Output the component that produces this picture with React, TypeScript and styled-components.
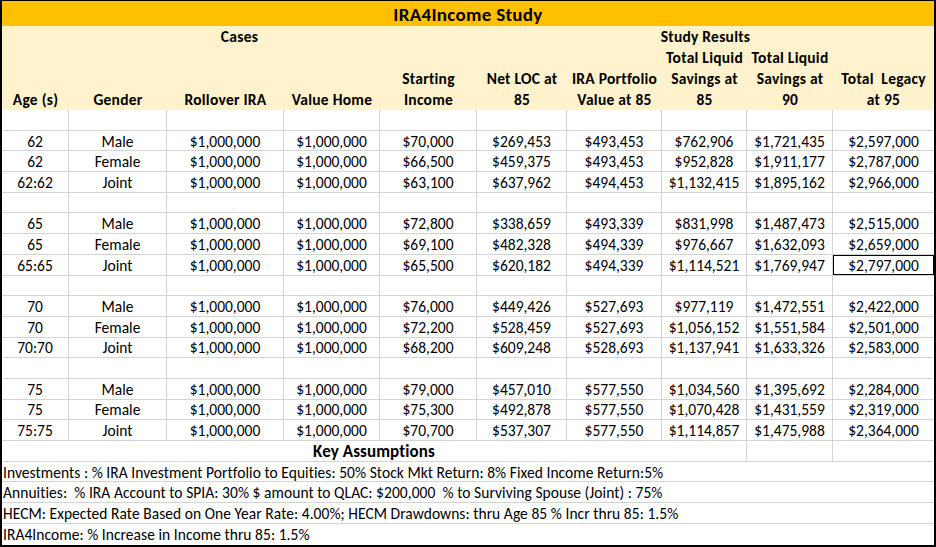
import React from "react";
import styled, { createGlobalStyle } from "styled-components";

const GlobalStyle = createGlobalStyle`
  html, body { margin: 0; padding: 0; background: #ffffff; }
  body { font-family: Carlito, Lato, "Liberation Sans", sans-serif; color: #000; }
`;

const GRID = "#d4d4d4";

const Sheet = styled.div`
  width: 936px;
  height: 547px;
  box-sizing: border-box;
  border-style: solid;
  border-color: #000;
  border-width: 1px 2px 2px 2px;
  display: grid;
  grid-template-columns: 67px 98px 117px 96px 97px 90px 95px 85px 86px 101px;
  grid-template-rows: 25px 21px 63px repeat(21, 20.7px);
  font-size: 15.5px;
  overflow: hidden;
`;

const TitleCell = styled.div`
  grid-column: 1 / -1;
  background: #ffc000;
  font-weight: 700;
  font-size: 19px;
  letter-spacing: 0.3px;
  display: flex;
  align-items: center;
  justify-content: center;
  padding-top: 1px;
`;

const GroupHeader = styled.div<{ $span: number }>`
  grid-column: span ${(p) => p.$span};
  background: #fff2cc;
  font-weight: 700;
  letter-spacing: 0.25px;
  display: flex;
  align-items: center;
  justify-content: center;
`;

const ColumnHeader = styled.div`
  background: #fff2cc;
  font-weight: 700;
  letter-spacing: 0.25px;
  display: flex;
  align-items: flex-end;
  justify-content: center;
  text-align: center;
  line-height: 21px;
  white-space: pre;
`;

const DataCell = styled.div<{ $last?: boolean; $boxed?: boolean }>`
  box-sizing: border-box;
  border-right: ${(p) => (p.$last ? "none" : `1px solid ${GRID}`)};
  border-bottom: 1px solid ${GRID};
  display: flex;
  align-items: center;
  justify-content: center;
  padding-top: 1px;
  white-space: nowrap;
  ${(p) => (p.$boxed ? "box-shadow: inset 0 0 0 1px #000;" : "")}
`;

const KeyTitle = styled.div`
  grid-column: 1 / span 8;
  box-sizing: border-box;
  border-right: 1px solid ${GRID};
  border-bottom: 1px solid ${GRID};
  font-weight: 700;
  font-size: 17px;
  letter-spacing: 0.1px;
  display: flex;
  align-items: center;
  justify-content: center;
  padding-top: 1px;
`;

const AssumptionRow = styled.div<{ $last?: boolean }>`
  grid-column: 1 / -1;
  box-sizing: border-box;
  border-bottom: ${(p) => (p.$last ? "none" : `1px solid ${GRID}`)};
  display: flex;
  align-items: center;
  padding: 1px 0 0 1px;
  letter-spacing: 0.05px;
  white-space: pre;
`;

const headers = [
  "Age (s)",
  "Gender",
  "Rollover IRA",
  "Value Home",
  "Starting\nIncome",
  "Net LOC at\n85",
  "IRA Portfolio\nValue at 85",
  "Total Liquid\nSavings at\n85",
  "Total Liquid\nSavings at\n90",
  "Total  Legacy\nat 95",
];

type Row = string[] | null;

const M = "$1,000,000";
const rows: Row[] = [
  null,
  ["62", "Male", M, M, "$70,000", "$269,453", "$493,453", "$762,906", "$1,721,435", "$2,597,000"],
  ["62", "Female", M, M, "$66,500", "$459,375", "$493,453", "$952,828", "$1,911,177", "$2,787,000"],
  ["62:62", "Joint", M, M, "$63,100", "$637,962", "$494,453", "$1,132,415", "$1,895,162", "$2,966,000"],
  null,
  ["65", "Male", M, M, "$72,800", "$338,659", "$493,339", "$831,998", "$1,487,473", "$2,515,000"],
  ["65", "Female", M, M, "$69,100", "$482,328", "$494,339", "$976,667", "$1,632,093", "$2,659,000"],
  ["65:65", "Joint", M, M, "$65,500", "$620,182", "$494,339", "$1,114,521", "$1,769,947", "$2,797,000"],
  null,
  ["70", "Male", M, M, "$76,000", "$449,426", "$527,693", "$977,119", "$1,472,551", "$2,422,000"],
  ["70", "Female", M, M, "$72,200", "$528,459", "$527,693", "$1,056,152", "$1,551,584", "$2,501,000"],
  ["70:70", "Joint", M, M, "$68,200", "$609,248", "$528,693", "$1,137,941", "$1,633,326", "$2,583,000"],
  null,
  ["75", "Male", M, M, "$79,000", "$457,010", "$577,550", "$1,034,560", "$1,395,692", "$2,284,000"],
  ["75", "Female", M, M, "$75,300", "$492,878", "$577,550", "$1,070,428", "$1,431,559", "$2,319,000"],
  ["75:75", "Joint", M, M, "$70,700", "$537,307", "$577,550", "$1,114,857", "$1,475,988", "$2,364,000"],
];

const assumptions = [
  "Investments : % IRA Investment Portfolio to Equities: 50% Stock Mkt Return: 8% Fixed Income Return:5%",
  "Annuities:  % IRA Account to SPIA: 30% $ amount to QLAC: $200,000  % to Surviving Spouse (Joint) : 75%",
  "HECM: Expected Rate Based on One Year Rate: 4.00%; HECM Drawdowns: thru Age 85 % Incr thru 85: 1.5%",
  "IRA4Income: % Increase in Income thru 85: 1.5%",
];

export default function App() {
  return (
    <>
      <GlobalStyle />
      <Sheet>
        <TitleCell>IRA4Income Study</TitleCell>
        <GroupHeader $span={5}>Cases</GroupHeader>
        <GroupHeader $span={5}>Study Results</GroupHeader>
        {headers.map((h, i) => (
          <ColumnHeader key={i}>{h}</ColumnHeader>
        ))}
        {rows.map((r, ri) =>
          (r ?? Array(10).fill("")).map((v, ci) => (
            <DataCell
              key={`${ri}-${ci}`}
              $last={ci === 9}
              $boxed={ri === 7 && ci === 9}
            >
              {v}
            </DataCell>
          ))
        )}
        <KeyTitle>Key Assumptions</KeyTitle>
        <DataCell />
        <DataCell $last />
        {assumptions.map((a, i) => (
          <AssumptionRow key={i} $last={i === assumptions.length - 1}>
            {a}
          </AssumptionRow>
        ))}
      </Sheet>
    </>
  );
}
